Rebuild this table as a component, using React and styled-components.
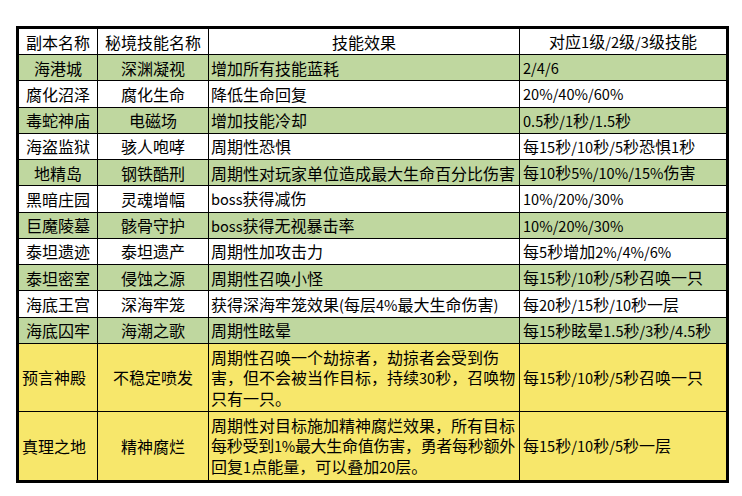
import React from "react";
import styled, { createGlobalStyle } from "styled-components";

const Global = createGlobalStyle`
  html, body { margin: 0; padding: 0; background: #ffffff; }
  body {
    font-family: "Noto Sans CJK SC", "Microsoft YaHei", "Noto Sans", sans-serif;
    color: #000;
  }
  * { box-sizing: border-box; }
`;

const Page = styled.div`
  padding: 26px 0 0 16px;
  width: 742px;
  height: 496px;
`;

const Table = styled.table`
  border: 3px solid #000;
  border-collapse: separate;
  border-spacing: 0;
  table-layout: fixed;
  width: 713px;
  font-size: 16px;
  line-height: 20px;
`;

const Row = styled.tr`
  height: ${(p) => p.$h}px;
  background: ${(p) => p.$bg};
`;

const Cell = styled.td`
  border-right: 1px solid #000;
  border-bottom: 1px solid #000;
  padding: 0;
  padding-left: ${(p) => (p.$align === "left" ? p.$pl || 2 : 0)}px;
  text-align: ${(p) => p.$align || "center"};
  vertical-align: middle;
  white-space: nowrap;
  &:last-child { border-right: none; }
  tr:last-child > & { border-bottom: none; }
`;

const Line = styled.div`
  display: block;
  letter-spacing: ${(p) => (p.$tight ? "-0.28px" : "normal")};
`;

const Latin = styled.span`
  font-size: 14.6px;
`;

const GREEN = "#BFD79F";
const YELLOW = "#F7E76B";
const WHITE = "#FFFFFF";

function Txt({ children }) {
  const parts = String(children).split(/([A-Za-z0-9%/.()]+)/);
  return (
    <>
      {parts.map((p, i) =>
        i % 2 === 1 ? <Latin key={i}>{p}</Latin> : <React.Fragment key={i}>{p}</React.Fragment>
      )}
    </>
  );
}

const rows = [
  ["海港城", "深渊凝视", ["增加所有技能蓝耗"], "2/4/6", GREEN],
  ["腐化沼泽", "腐化生命", ["降低生命回复"], "20%/40%/60%", WHITE],
  ["毒蛇神庙", "电磁场", ["增加技能冷却"], "0.5秒/1秒/1.5秒", GREEN],
  ["海盗监狱", "骇人咆哮", ["周期性恐惧"], "每15秒/10秒/5秒恐惧1秒", WHITE],
  ["地精岛", "钢铁酷刑", ["周期性对玩家单位造成最大生命百分比伤害"], "每10秒5%/10%/15%伤害", GREEN],
  ["黑暗庄园", "灵魂增幅", ["boss获得减伤"], "10%/20%/30%", WHITE],
  ["巨魔陵墓", "骸骨守护", ["boss获得无视暴击率"], "10%/20%/30%", GREEN],
  ["泰坦遗迹", "泰坦遗产", ["周期性加攻击力"], "每5秒增加2%/4%/6%", WHITE],
  ["泰坦密室", "侵蚀之源", ["周期性召唤小怪"], "每15秒/10秒/5秒召唤一只", GREEN],
  ["海底王宫", "深海牢笼", ["获得深海牢笼效果(每层4%最大生命伤害)"], "每20秒/15秒/10秒一层", WHITE],
  ["海底囚牢", "海潮之歌", ["周期性眩晕"], "每15秒眩晕1.5秒/3秒/4.5秒", GREEN],
];

const tallRows = [
  [
    "预言神殿",
    "不稳定喷发",
    [
      ["周期性召唤一个劫掠者，劫掠者会受到伤"],
      ["害，但不会被当作目标，持续30秒，召唤物"],
      ["只有一只。"],
    ],
    "每15秒/10秒/5秒召唤一只",
    68,
  ],
  [
    "真理之地",
    "精神腐烂",
    [
      ["周期性对目标施加精神腐烂效果，所有目标"],
      ["每秒受到1%最大生命值伤害，勇者每秒额外", true],
      ["回复1点能量，可以叠加20层。"],
    ],
    "每15秒/10秒/5秒一层",
    68,
  ],
];

export default function App() {
  return (
    <Page>
      <Global />
      <Table>
        <colgroup>
          <col style={{ width: 79 }} />
          <col style={{ width: 111 }} />
          <col style={{ width: 311 }} />
          <col style={{ width: 206 }} />
        </colgroup>
        <tbody>
          <Row $h={26} $bg={WHITE}>
            <Cell>副本名称</Cell>
            <Cell>秘境技能名称</Cell>
            <Cell>技能效果</Cell>
            <Cell>
              <Txt>对应1级/2级/3级技能</Txt>
            </Cell>
          </Row>
          {rows.map(([name, skill, effect, levels, bg]) => (
            <Row key={name} $h={26.27} $bg={bg}>
              <Cell>{name}</Cell>
              <Cell>{skill}</Cell>
              <Cell $align="left" $pl={2}>
                {effect.map((l) => (
                  <Line key={l}>
                    <Txt>{l}</Txt>
                  </Line>
                ))}
              </Cell>
              <Cell $align="left" $pl={3}>
                <Txt>{levels}</Txt>
              </Cell>
            </Row>
          ))}
          {tallRows.map(([name, skill, effect, levels, h]) => (
            <Row key={name} $h={h} $bg={YELLOW}>
              <Cell $align="left" $pl={3}>{name}</Cell>
              <Cell>{skill}</Cell>
              <Cell $align="left" $pl={2}>
                {effect.map(([l, tight]) => (
                  <Line key={l} $tight={tight}>
                    <Txt>{l}</Txt>
                  </Line>
                ))}
              </Cell>
              <Cell $align="left" $pl={3}>
                <Txt>{levels}</Txt>
              </Cell>
            </Row>
          ))}
        </tbody>
      </Table>
    </Page>
  );
}
